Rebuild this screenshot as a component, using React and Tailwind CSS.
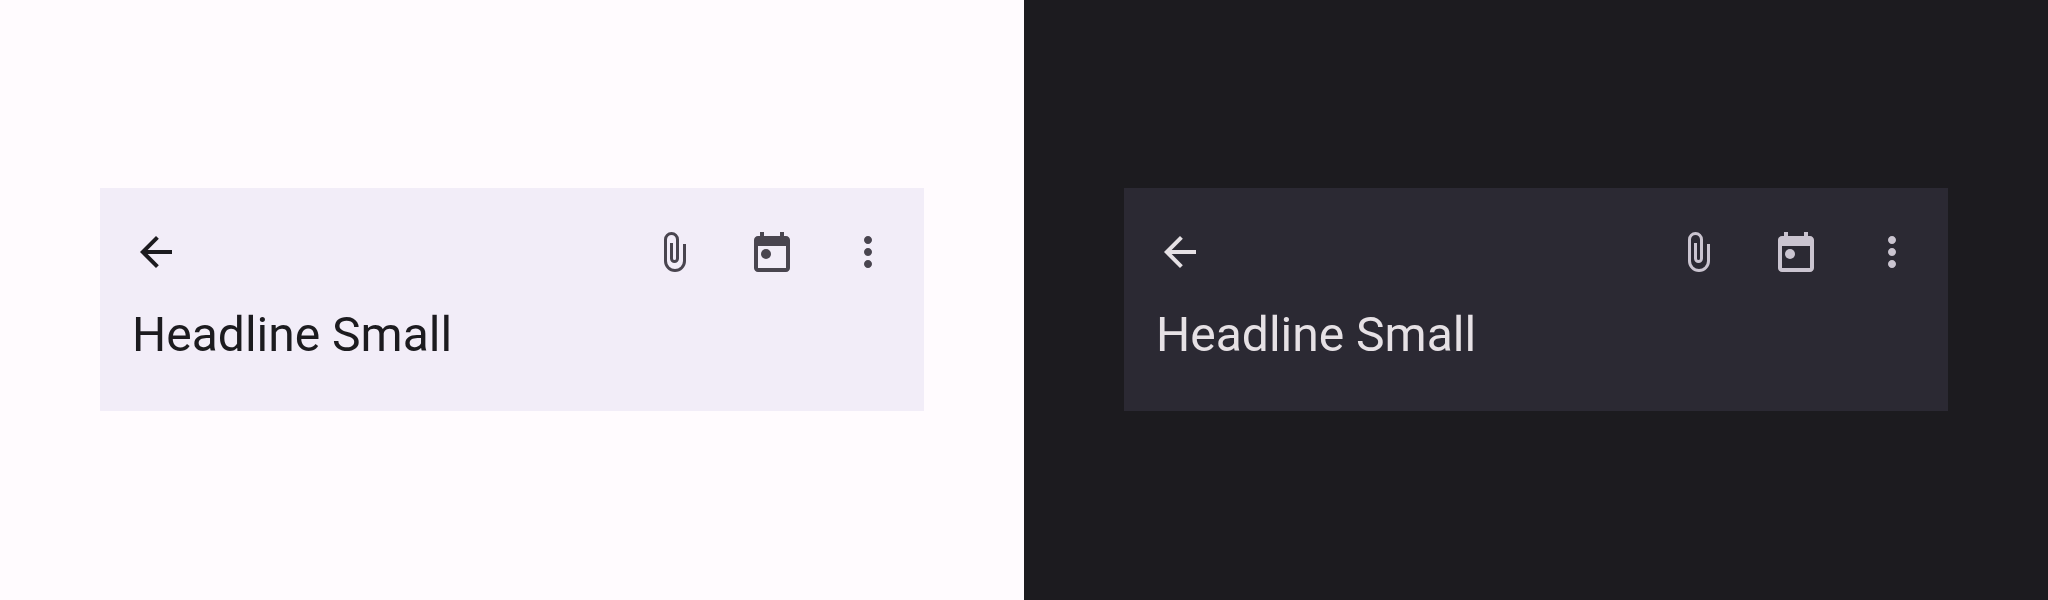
const ArrowBack = ({ className }) => (
  <svg viewBox="0 0 24 24" className={className} fill="currentColor">
    <path d="M20 11H7.83l5.59-5.59L12 4l-8 8 8 8 1.41-1.41L7.83 13H20v-2z" />
  </svg>
);

const Clip = ({ className }) => (
  <svg viewBox="0 0 48 48" className={className} fill="none" stroke="currentColor" strokeWidth="3">
    <path d="M32.5 16v17a9.5 9.5 0 0 1-19 0V11.5a6 6 0 0 1 12 0V30.5a3 3 0 0 1-6 0V15" />
  </svg>
);

const CalendarDot = ({ className }) => (
  <svg viewBox="0 0 24 24" className={className} fill="currentColor">
    <path
      fillRule="evenodd"
      d="M6 2h2v2h8V2h2v2h1c1.1 0 2 .9 2 2v14c0 1.1-.9 2-2 2H5c-1.1 0-2-.9-2-2V6c0-1.1.9-2 2-2h1V2zM5 9v11h14V9H5z"
    />
    <circle cx="9" cy="13" r="2.5" />
  </svg>
);

const MoreVert = ({ className }) => (
  <svg viewBox="0 0 24 24" className={className} fill="currentColor">
    <path d="M12 8c1.1 0 2-.9 2-2s-.9-2-2-2-2 .9-2 2 .9 2 2 2zm0 2c-1.1 0-2 .9-2 2s.9 2 2 2 2-.9 2-2-.9-2-2-2zm0 6c-1.1 0-2 .9-2 2s.9 2 2 2 2-.9 2-2-.9-2-2-2z" />
  </svg>
);

const AppBar = ({ surface, bar, title, icon }) => (
  <div className={`w-1/2 h-[600px] flex justify-center pt-[188px] ${surface}`}>
    <div className={`w-[824px] h-[223px] ${bar}`}>
      <div className="flex items-center justify-between px-2 pt-4">
        <button className={`w-[96px] h-[96px] flex items-center justify-center ${title}`}>
          <ArrowBack className="w-12 h-12" />
        </button>
        <div className={`flex ${icon}`}>
          <button className="w-[96px] h-[96px] flex items-center justify-center">
            <Clip className="w-12 h-12" />
          </button>
          <button className="w-[96px] h-[96px] flex items-center justify-center">
            <CalendarDot className="w-12 h-12" />
          </button>
          <button className="w-[96px] h-[96px] flex items-center justify-center">
            <MoreVert className="w-12 h-12" />
          </button>
        </div>
      </div>
      <h1 className={`px-8 text-[48px] leading-[70px] font-normal font-['Roboto',sans-serif] will-change-transform ${title}`}>
        Headline Small
      </h1>
    </div>
  </div>
);

export default function App() {
  return (
    <div className="flex w-[2048px] h-[600px]">
      <AppBar surface="bg-[#fffbfe]" bar="bg-[#f2edf8]" title="text-[#1c1b1f]" icon="text-[#49454f]" />
      <AppBar surface="bg-[#1c1b1f]" bar="bg-[#2b2933]" title="text-[#e6e1e5]" icon="text-[#cac4d0]" />
    </div>
  );
}
